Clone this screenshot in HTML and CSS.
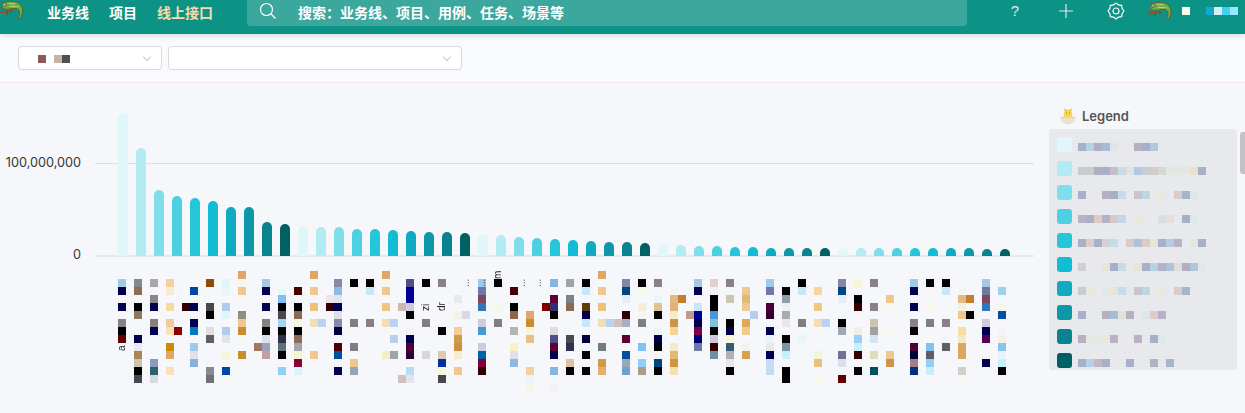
FILE: index.html
```html
<!DOCTYPE html>
<html lang="en">
  <head>
    <meta charset="UTF-8" />
    <meta name="viewport" content="width=device-width, initial-scale=1.0" />
    <title>线上接口</title>
    <link rel="stylesheet" href="styles.css">
  </head>
  <body>
    <svg class="defs" width="0" height="0">
      <symbol id="chameleon" viewBox="0 0 26 20">
        <path d="M0 11.5 L13 9.5 L13 11.5 L0 13.5 Z" fill="#a5472c" />
        <path d="M8 11 L7 15 M12 10 L12 13" stroke="#5d5a34" stroke-width="1.4" />
        <path d="M1.5 4.5 C5 0.5 14 0.5 19 3 C24 6 24.5 13 20 19 L18.5 18 C21 13 20.5 9.5 17 8.5 C12 8 7 10.5 3 8.5 Z" fill="#6fae45" stroke="#5d5a34" stroke-width="0.9" />
        <circle cx="5" cy="4.6" r="1.8" fill="#a9b78a" stroke="#4a4a2c" stroke-width=".7" />
        <path d="M9 3.2 L16 4 M10 6.4 L19 6.8" stroke="#b9d067" stroke-width="1.1" fill="none" />
      </symbol>
    </svg>

    <header class="topbar">
      <svg class="logo"><use href="#chameleon" /></svg>
      <nav class="nav">
        <a>业务线</a>
        <a>项目</a>
        <a class="active">线上接口</a>
      </nav>
      <div class="search">
        <svg class="search-icon" viewBox="0 0 18 18" width="18" height="18">
          <circle cx="7.5" cy="7.5" r="6" fill="none" stroke="#fff" stroke-width="1.2" />
          <path d="M12 12 L16.5 16.5" stroke="#fff" stroke-width="1.2" />
        </svg>
        <span>搜索：业务线、项目、用例、任务、场景等</span>
      </div>
      <div class="tools">
        <span class="help">?</span>
        <svg viewBox="0 0 14 14" width="14" height="14" class="plus">
          <path d="M7 0 V14 M0 7 H14" stroke="#d5efeb" stroke-width="1.2" />
        </svg>
        <svg viewBox="0 0 18 18" width="18" height="18" class="gear">
          <path d="M17 9 L15.1 11.53 L14.66 14.66 L11.53 15.1 L9 17 L6.47 15.1 L3.34 14.66 L2.9 11.53 L1 9 L2.9 6.47 L3.34 3.34 L6.47 2.9 L9 1 L11.53 2.9 L14.66 3.34 L15.1 6.47 Z" fill="none" stroke="#fff" stroke-width="1.2" stroke-linejoin="round" />
          <circle cx="9" cy="9" r="3" fill="none" stroke="#fff" stroke-width="1.2" />
        </svg>
        <svg class="avatar"><use href="#chameleon" /></svg>
        <div class="user">
          <i class="px px-cream"></i>
          <div class="user-name">
            <i class="px px-a"></i><i class="px px-b"></i><i class="px px-c"></i><i class="px px-d"></i>
          </div>
        </div>
      </div>
    </header>

    <section class="filters">
      <div class="select select-short">
        <i class="px px-e"></i><i class="px px-gap"></i><i class="px px-f"></i><i class="px px-g"></i>
        <span class="chevron"></span>
      </div>
      <div class="select select-long">
        <span class="chevron"></span>
      </div>
    </section>

    <main class="board">
      <section class="chart">
        <div class="plot">
          <div class="gridline"><span>100,000,000</span></div>
          <div class="baseline"><span>0</span></div>
          <div class="bars" id="bars"></div>
        </div>
        <div class="tiles" id="tiles"></div>
      </section>

      <aside class="legend">
        <h3 class="legend-title">
          <svg viewBox="0 0 16 17" width="16" height="17">
            <path d="M4 9 C3 4 5 1.5 8 1.5 C11 1.5 13 4 12 9 Z" fill="#f7d650" />
            <path d="M4.5 1 L6 3 M11.5 1 L10 3" stroke="#e3a92f" stroke-width="1.2" />
            <path d="M6 5 H7 M9 5 H10" stroke="#9a7a2a" stroke-width="1" />
            <path d="M0.5 8 C3 11 13 11 15.5 8 C15.5 13.5 12 16.5 8 16.5 C4 16.5 0.5 13.5 0.5 8 Z" fill="#e6e2d4" />
            <path d="M0.5 8 C3 10 13 10 15.5 8 C15 11 1 11 0.5 8 Z" fill="#f3b45a" />
          </svg>
          Legend
        </h3>
        <div class="legend-body">
          <ul class="legend-list" id="legend"></ul>
          <div class="scrollbar"><div class="thumb"></div></div>
        </div>
      </aside>
    </main>

    <script src="chart.js"></script>
  </body>
</html>
```

FILE: styles.css
```css
* {
  box-sizing: border-box;
}
html,
body {
  height: 100%;
}
body {
  margin: 0;
  overflow: hidden;
  font-family: "Liberation Sans", "Noto Sans CJK SC", sans-serif;
  background-color: #f6f7fb;
}
.defs {
  position: absolute;
}
i {
  display: block;
}

/* top bar */
.topbar {
  display: flex;
  align-items: flex-start;
  height: 34px;
  background: #0c9385;
  box-shadow: 0 2px 6px rgba(0, 0, 0, 0.12);
  position: relative;
  color: #fff;
}
.logo {
  width: 27px;
  height: 20px;
  margin: 0 0 0 -1px;
  flex: none;
}
.nav {
  display: flex;
  gap: 20px;
  margin-left: 21px;
  height: 24px;
  align-items: center;
  font-size: 14px;
  font-weight: 700;
}
.nav .active {
  color: #f5dcae;
}
.search {
  display: flex;
  align-items: center;
  width: 720px;
  height: 26px;
  margin-left: 34px;
  padding-left: 12px;
  background: rgba(255, 255, 255, 0.2);
  border-radius: 0 0 4px 4px;
  font-size: 14px;
  font-weight: 700;
}
.search-icon {
  margin-right: 21px;
  margin-top: -4px;
}
.search span {
  margin-top: -3px;
}
.tools {
  display: flex;
  align-items: center;
  height: 22px;
  margin-left: 43px;
}
.help {
  width: 10px;
  margin-top: -2px;
  font-size: 15px;
  color: #d5efeb;
  text-align: center;
}
.plus {
  margin-left: 39px;
}
.gear {
  margin-left: 34px;
}
.avatar {
  width: 26px;
  height: 20px;
  margin-left: 23px;
  flex: none;
}
.user {
  display: flex;
  align-items: center;
  margin-left: 8px;
  gap: 16px;
}
.user-name {
  display: flex;
}
.px {
  width: 8px;
  height: 8px;
}
.px-cream { background: #fffff0; }
.px-a { background: #10aad0; }
.px-b { background: #d8eeee; }
.px-c { background: #40d0f0; }
.px-d { background: #90ecfc; }
.px-e { background: #8c5858; }
.px-gap { background: transparent; }
.px-f { background: #c8b4a4; }
.px-g { background: #505050; }

/* filters */
.filters {
  display: flex;
  gap: 6px;
  height: 49px;
  padding: 12px 0 0 18px;
  background: #f9fafd;
  border-bottom: 1px solid #f2e6e6;
}
.select {
  display: flex;
  align-items: center;
  height: 24px;
  padding-left: 19px;
  background: #fff;
  border: 1px solid #d9d9d9;
  border-radius: 4px;
  position: relative;
}
.select-short {
  width: 144px;
}
.select-short .px {
  margin-top: 2px;
}
.select-long {
  width: 294px;
}
.chevron {
  width: 6px;
  height: 6px;
  margin-left: auto;
  margin-right: 11px;
  margin-top: -3px;
  border-right: 1px solid #c8c8c8;
  border-bottom: 1px solid #c8c8c8;
  transform: rotate(45deg);
}

/* chart */
.board {
  display: flex;
}
.chart {
  width: 1049px;
  flex: none;
}
.plot {
  position: relative;
  height: 174px;
}
.gridline,
.baseline {
  position: absolute;
  left: 95px;
  width: 939px;
}
.gridline {
  top: 80px;
  height: 1px;
  background: #dcdce2;
}
.baseline {
  top: 172px;
  height: 2px;
  background: #e8e9ee;
}
.gridline span,
.baseline span {
  position: absolute;
  right: 953px;
  top: -8px;
  font-family: Inter, sans-serif;
  font-size: 12.7px;
  line-height: 16px;
  color: #333;
  white-space: nowrap;
}
.bars {
  position: relative;
  display: flex;
  align-items: flex-end;
  gap: 8px;
  height: 173px;
  padding-left: 118px;
}
.bar {
  flex: none;
  width: 10px;
  border-radius: 5px 5px 0 0;
}
.tiles {
  display: grid;
  grid-template-columns: repeat(112, 8px);
  grid-template-rows: repeat(15, 8px);
  margin: 14px 0 0 118px;
}
.tile-text {
  writing-mode: vertical-rl;
  transform: rotate(180deg);
  font-size: 10px;
  line-height: 8px;
  color: #222;
}

/* legend */
.legend {
  width: 196px;
  flex: none;
}
.legend-title {
  display: flex;
  align-items: center;
  gap: 6px;
  height: 16px;
  margin: 25px 0 5px 11px;
  font-family: Inter, sans-serif;
  font-size: 13px;
  font-weight: 600;
  color: #555;
}
.legend-body {
  display: flex;
}
.legend-list {
  display: flex;
  flex-direction: column;
  gap: 9px;
  width: 188px;
  height: 241px;
  margin: 0;
  padding: 8px 0 0 8px;
  list-style: none;
  background: #e8e9ed;
  border-radius: 3px;
  overflow: hidden;
}
.legend-item {
  display: flex;
  gap: 6px;
}
.swatch {
  flex: none;
  width: 15px;
  height: 15px;
  border-radius: 3px;
}
.legend-text {
  display: grid;
  grid-template-columns: repeat(16, 8px);
  grid-template-rows: 8px;
  margin-top: 6px;
  filter: blur(0.4px);
}
.scrollbar {
  padding: 3px 0 0 3px;
}
.thumb {
  width: 5px;
  height: 42px;
  background: #c2c2c4;
  border-radius: 3px 0 0 3px;
}
```

FILE: chart.js
```js
var COLORS = ["#e0f7fa", "#b2ebf2", "#80deea", "#4dd0e1", "#26c6da", "#12bbd6", "#10aac2", "#0e97a8", "#08838f", "#006064"];
var BASE = 256;

// y of each bar's top, read off the screen
var TOPS = [113, 148, 190, 196, 198, 201, 207, 207, 222, 224, 226, 227, 227, 229, 229, 230,
  231, 232, 232, 233, 234, 235, 237, 238, 239, 240, 241, 242, 242, 243, 244, 245, 246, 246,
  247, 247, 248, 248, 248, 248, 248, 248, 248, 248, 248, 248, 248, 248, 249, 249];

// column: "row:colour" pairs
var TILES = {
  0: "1:a0cbe8 2:000048 4:000050 6:8a8088 7:000 8:600000",
  2: "1:87878f 2:8a7050 4:000 5:8a7a5a 8:000048 9:e8e8f0 10:a88850 11:ccc4b0 12:000 13:444850",
  4: "1:a8a8a8 3:888 4:000050 6:887f7f 7:000050 11:8a9ac0 12:2a6070 13:d8d8e0",
  6: "1:f5d0a0 2:f5ecd0 4:f8d8a0 6:efcba0 7:f8e0b8 9:cc8c00 10:e0a860 12:f8e0b8",
  7: "7:8c0000",
  8: "4:300000",
  9: "2:0048a0 4:000050 6:000050 7:0078c0 9:a0c8e8 10:e0e0e8 11:88b0d8",
  11: "1:8c4c08 4:484848 5:000 7:e0e0e4 8:606060 12:888890 13:707078",
  13: "1:e0f5fa 2:eaf5f5 4:b0cce8 5:e0f5fa 7:b0cce8 8:e0e4e8 10:f5f5d8 12:0048a0",
  15: "0:e0a868 1:f5f8f0 2:eec890 5:909078 6:eec890 7:cc8c30 8:f5f8ea 10:cc8c30",
  17: "9:a07860",
  18: "1:a0c8e8 2:000050 4:000050 6:887f7f 7:000 8:d8e0ec 9:a0a0b8 10:c0a0a0",
  20: "2:e8f8fa 3:80c0f0 4:000 5:484850 6:a0d4f8 7:000 8:303048 9:607078 10:000 12:90d0f8",
  22: "2:480000 4:000 5:8c6c50 6:f8f5e0 7:000 8:8c6c58 9:a0a8a8 10:f5f5c8 11:880038 12:d8f4fa",
  24: "0:e0a868 2:eec890 4:eec078 6:f5dcb8 10:eec890",
  25: "6:b8d4f4",
  26: "3:f0e4e8 4:300000",
  27: "1:8888a8 2:90b8e0 3:e0e4ec 4:000050 5:e0e0e0 6:8888a8 7:000040 9:500000 10:0050a0 12:000050",
  29: "1:000 6:808084 9:808084 11:eec888 12:98a4b4",
  31: "1:000 2:c8e8fa 6:887f7f",
  33: "0:e0a868 1:f5f8f0 2:eec890 4:eec480 6:f5dcb8 10:f5ecc8",
  34: "6:b8d4f4 8:b8d0ee 10:a0a4ac",
  35: "4:d0b8b0 13:d0c0c0",
  36: "1:505088 2:000090 3:000090 4:ccccdc 5:000 7:f4f4f8 8:000050 9:500038 10:300030 12:b8dcf4 13:e0e4ec",
  38: "1:000 6:808084 10:d8d8dc",
  40: "1:8a8088 7:000 10:e0c8b4 11:0030a0 12:f8f5d8 13:484848",
  42: "3:e8e8f0 5:f5f0ea 7:f8cc90 8:cc9c48 9:cc9040 10:f5ecc8 12:eec890",
  43: "5:d8d8e8",
  45: "1:a0c8e8 2:7078a8 3:804860 4:3078b8 6:ccccdc 7:4898d0 9:ccccdc 10:0060a8 11:800038 12:300008",
  47: "1:000 4:f4f8ec 6:808084",
  49: "2:480000 4:000 5:8c6848 7:b4b4b4 9:f8f0c8 10:e0e0e8 11:90b8e4",
  51: "5:e0a868 6:cc8c30 7:f8f5d8 8:e8c080 12:f4d0a0 13:e8f4fa 14:f8f5e0",
  53: "4:800000",
  54: "1:88b4e0 3:600038 4:303070 5:000 7:e0dce4 8:505088 9:600038 10:000050 12:88b4e0 14:f4f0f8",
  56: "1:a0a0a8 3:808088 4:886c50 8:484c50 9:303050 11:e4c0a0 12:000",
  58: "1:000 2:c8e8fa 4:603c10 5:000050 6:c8e8fa 8:000038 10:000 12:000",
  60: "0:e0a868 2:eec890 4:eec078 6:f5dcb8 9:707c80 11:cc9c48 12:e4b070",
  61: "6:b8d4f4",
  62: "6:d4c0b8",
  63: "1:8088a8 2:004880 3:e8ecf4 5:300000 6:a8b0c8 8:600030 10:0050a0 11:98a8b8 12:70a0d0",
  65: "1:000 2:f6f8f0 4:f8ecd8 5:f4f4f4 6:808084 9:80c4f4 11:90d0f8 12:a8a088",
  67: "1:8a8088 3:eaf5f5 4:e0c490 5:000 7:eef5fa 8:000048 9:000 10:f5f5f5 11:004878 12:000",
  69: "2:f5f4f4 3:e4b880 4:e4b078 5:f5ecc8 6:cc9448 7:f5d498 9:f5e8cc 10:e4b878 11:cc9840 12:f5e0b0",
  70: "3:c48028",
  71: "5:c09c88",
  72: "1:a0c8e8 2:000050 4:c8e8fa 5:000090 6:000050 7:800048 8:000070 9:7078a8",
  74: "1:e0d0cc 2:f4f0f8 3:000 4:000 5:4898d8 6:80c0e0 7:000 8:ccc8d8 9:300000 10:7090a0",
  76: "1:8a8088 3:ccc4b0 6:000 7:000048 8:f8f5d8 9:306070 10:b0b0b8 11:e8e8e8 12:000",
  78: "2:eec890 3:e0b878 4:eec890 6:e0a858 7:eecc90 9:f5f0ea 10:d8a050",
  79: "5:b8ccec",
  81: "1:a0c8e8 2:7078a8 4:500038 5:300030 7:000050 8:e8f4fa 9:e8e8e8 10:000050 11:c8dcf4 12:c0dcf0",
  83: "2:000 3:909ca8 4:eceef8 5:a8acac 6:e8e8ec 8:000 9:7898a8 10:c8f0fa 12:000 13:000",
  85: "1:000 2:c8e8fa 6:808084 8:e8f4fa",
  87: "2:f8d4a0 4:eec880 6:f5dcb8 10:f4f4d8 11:e8c080 13:f6f8f0",
  88: "6:b8d4f4",
  90: "1:8088a8 2:004880 3:e8ecf4 5:f0f8f8 6:000 7:a0a8b8 9:f0f8f8 10:707098 11:d8e0ec 13:600000",
  92: "1:f8f5d0 3:000 4:300000 7:f0eee4 8:98d0f8 9:c8f0fa 10:300000 12:000",
  94: "1:8a8088 4:8a8088 6:ccc4b0 7:a0a0a4 8:d4e4f4 10:e0dcb8 12:005060",
  96: "3:eec888 4:f6f8f0 7:f6f8f0 10:eec890 11:cc9448",
  99: "1:a0c8e8 2:000050 4:000050 6:8a8088 7:000 9:500038 10:000038 11:a08088 12:003080",
  101: "1:000 4:f6f8f0 6:808084 9:80c4f4 10:606064 11:90d0f8 12:c8ecfa",
  103: "1:000 2:c8e8fa 6:8a8088 8:f4f4f8 9:606064",
  105: "2:f5f4f4 3:e4b880 4:f5f0e0 5:eec890 7:f5dca0 8:f5e8c8 9:d8a860 10:d8a860 12:d0d0d0 13:f6f8f0",
  106: "3:c48028 5:000",
  108: "1:a0c8e8 2:7078a8 3:804860 4:3078b8 6:ccccdc 7:000050 8:500058 11:000050",
  110: "2:a0d0f0 4:f6f5ea 5:0050a8 7:f4f4f4 8:f5f0e8 9:88c4f0 10:e8f4fa 11:c8f0fa 12:000"
};

// scraps of axis label that show between the tiles: column, row, row span, text
var TILE_TEXT = [[0, 9, 1, "a"], [38, 3, 2, "zi"], [40, 3, 2, "dr"], [47, 0, 1, "m"],
  [43, 0, 2, "..."], [45, 0, 2, "..."], [50, 0, 2, "..."], [52, 0, 2, "..."]];

// one line per legend entry, "column:colour"
var LEGEND = [
  "0:a8b0c8 1:b8d0e4 2:b0b0c4 3:a8bcd8 4:e0e4e8 7:b8b0c0 8:a8b0c8 9:b0c8e0",
  "0:c8ccd0 1:c8ccd0 2:b0b0c0 3:a8b0c8 4:c8bcc8 5:c8dce8 6:e0e4e0 7:b0c8e0 8:c8ccd4 9:d4ccc8 10:d4d8d8 11:e4e6e4 12:e4e6e2 13:e4e6e0 14:e8e0d0 15:a8b0c8",
  "0:a8b0c8 3:b8b0c0 4:a8b0c8 5:c8dce8 7:c8c4cc 8:c0d4e4 10:e8e8dc 12:dcccc8 13:a8b4cc 14:e0e6e8",
  "0:b8b4c4 1:b0b0c4 2:dcccc8 3:b8b0c4 4:d4c8c8 5:c4d8e8 7:e8e8dc 10:d4e0e6 11:e4e0d8 13:a8b0c8 14:dce8ea",
  "0:a8b0c8 1:dcccc8 2:a8b0c8 3:d4d0d4 4:c8dce8 6:dcccc8 7:b0c0d8 8:dcccc8 9:e8e4d8 10:a8b0c8 11:b8cce0 12:b8b0c4 14:e4e6e0 15:a8b0c8",
  "0:d0d0d4 3:e8e4d8 4:a8b0c8 5:c8dce8 7:e8e4d8 8:a8b0c8 9:b8d0e4 10:b0b4c4 11:b0c4d8 12:e0dcd8 13:b0b0c0 14:b0c4dc 15:e0e6ea",
  "0:c8ccd0 1:e8e8e0 3:e0e8ea 4:e8e4d8 5:c8dce8 6:e0e8ea 7:c8c4cc 8:c0d4e4 10:e8e8dc 12:dcccc8 13:a8b4cc",
  "0:a8b0c8 3:b4b0c4 4:a8bcd4 5:dce4dc 6:b8b0c0 8:dce4ec 9:dcccc8 10:b8b0c8",
  "0:b8b0c0 1:e8e8e0 2:e0e8ea 3:e8e8dc 4:b8b0c4 7:b8b0c4 9:a8b0c8 10:dce8ea",
  "0:a8b0c8 1:b8d0e4 2:c4b8c4 3:a8b0c8 6:a8b0c8 9:b4b0c4 11:a8b4cc"
];

function el(cls, parent) {
  var node = document.createElement("div");
  node.className = cls;
  parent.appendChild(node);
  return node;
}

var bars = document.getElementById("bars");
TOPS.forEach(function (top, i) {
  var bar = el("bar", bars);
  bar.style.height = BASE - top + "px";
  bar.style.background = COLORS[i % 10];
});

var tiles = document.getElementById("tiles");
Object.keys(TILES).forEach(function (col) {
  TILES[col].split(" ").forEach(function (pair) {
    var p = pair.split(":");
    var tile = el("tile", tiles);
    tile.style.gridArea = +p[0] + 1 + " / " + (+col + 1);
    tile.style.background = "#" + p[1];
  });
});
TILE_TEXT.forEach(function (t) {
  var label = el("tile-text", tiles);
  label.style.gridArea = t[1] + 1 + " / " + (t[0] + 1) + " / span " + t[2];
  label.textContent = t[3];
});

var legend = document.getElementById("legend");
LEGEND.forEach(function (line, i) {
  var item = document.createElement("li");
  item.className = "legend-item";
  legend.appendChild(item);
  el("swatch", item).style.background = COLORS[i];
  var text = el("legend-text", item);
  line.split(" ").forEach(function (pair) {
    var p = pair.split(":");
    var tile = el("tile", text);
    tile.style.gridColumn = +p[0] + 1;
    tile.style.background = "#" + p[1];
  });
});
```
